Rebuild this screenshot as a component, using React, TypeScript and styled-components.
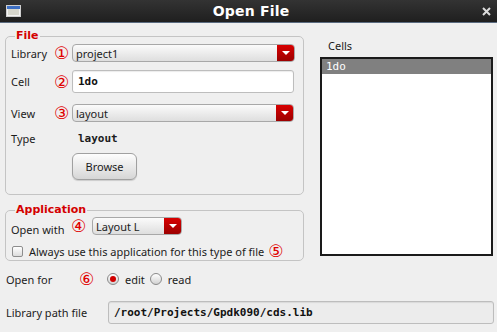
import styled, { createGlobalStyle } from "styled-components";

const GlobalStyle = createGlobalStyle`
  html, body {
    margin: 0;
    padding: 0;
    background: #efefef;
  }
  body {
    font-family: "Noto Sans", "DejaVu Sans", sans-serif;
    font-size: 11px;
    color: #1c1c1c;
  }
`;

const MONO = `"DejaVu Sans Mono", "Liberation Mono", monospace`;

const Window = styled.div`
  width: 497px;
  height: 332px;
  background: #efefef;
  display: flex;
  flex-direction: column;
  overflow: hidden;
`;

const TitleBar = styled.div`
  height: 22px;
  flex: none;
  display: flex;
  align-items: center;
  padding: 0 6px;
  background: linear-gradient(#333333, #1f1f1f);
  border-bottom: 1px solid #5a6b80;
`;

const Title = styled.div`
  flex: 1;
  text-align: center;
  color: #ffffff;
  font-family: "DejaVu Sans", sans-serif;
  font-weight: bold;
  font-size: 14px;
  letter-spacing: 0.2px;
`;

const CloseX = styled.div`
  width: 10px;
  height: 10px;
  display: flex;
  align-items: center;
  justify-content: center;
`;

const Main = styled.div`
  display: flex;
  padding: 6px 4px 0 5px;
  gap: 16px;
`;

const LeftCol = styled.div`
  width: 299px;
  display: flex;
  flex-direction: column;
  gap: 8px;
`;

const Group = styled.fieldset`
  margin: 0;
  padding: 0 8px ${p => p.$pb}px 5px;
  border: 1px solid #c4c4c4;
  border-radius: 5px;
  min-width: 0;
`;

const Legend = styled.legend`
  color: #d40000;
  font-family: "DejaVu Sans", sans-serif;
  font-weight: bold;
  font-size: 11px;
  line-height: 14px;
  padding: 0 1px;
  margin-left: 4px;
`;

const Row = styled.div`
  display: flex;
  align-items: center;
  height: ${p => p.$h}px;
  margin-top: ${p => p.$mt}px;
`;

const Label = styled.div`
  width: ${p => p.$w}px;
  flex: none;
  padding-top: ${p => p.$pt || 0}px;
`;

const Num = styled.span`
  color: #e00000;
  font-family: "DejaVu Sans", sans-serif;
  font-size: 17px;
  line-height: 14px;
  width: ${p => p.$w || 18}px;
  margin-left: ${p => p.$ml || 0}px;
  flex: none;
`;

const Combo = styled.div`
  width: ${p => p.$w}px;
  height: 18px;
  display: flex;
  align-items: stretch;
  border: 1px solid #a8a8a8;
  border-radius: 4px;
  background: linear-gradient(#fbfbfb, #dedede);
  box-sizing: border-box;
  overflow: hidden;
`;

const ComboText = styled.div`
  flex: 1;
  padding-left: 3px;
  display: flex;
  align-items: center;
  color: #222;
`;

const ComboArrow = styled.div`
  width: 17px;
  background: linear-gradient(#d80000, #9c0000);
  display: flex;
  align-items: center;
  justify-content: center;
  &::after {
    content: "";
    border-left: 4px solid transparent;
    border-right: 4px solid transparent;
    border-top: 4px solid #ffffff;
  }
`;

const TextField = styled.div`
  width: ${p => p.$w}px;
  height: ${p => p.$h}px;
  box-sizing: border-box;
  border: 1px solid #bdbdbd;
  border-radius: 3px;
  background: ${p => (p.$grey ? "#ececec" : "#ffffff")};
  box-shadow: inset 0 1px 1px rgba(0, 0, 0, 0.08);
  display: flex;
  align-items: center;
  padding-left: 5px;
  font-family: ${MONO};
  font-weight: bold;
  color: #111;
`;

const MonoValue = styled.div`
  font-family: ${MONO};
  font-weight: bold;
  padding-left: 6px;
`;

const Button = styled.div`
  width: 65px;
  height: 27px;
  box-sizing: border-box;
  border: 1px solid #a0a0a0;
  border-radius: 6px;
  background: linear-gradient(#fdfdfd, #d6d6d6);
  box-shadow: 0 1px 1px rgba(0, 0, 0, 0.15);
  display: flex;
  align-items: center;
  justify-content: center;
  margin-left: 61px;
`;

const Check = styled.div`
  width: 11px;
  height: 11px;
  box-sizing: border-box;
  border: 1px solid #8d8d8d;
  border-radius: 2px;
  background: linear-gradient(#ffffff, #dcdcdc);
  margin: 0 6px 0 1px;
`;

const RightCol = styled.div`
  width: 173px;
  display: flex;
  flex-direction: column;
`;

const CellsLabel = styled.div`
  padding: 10px 0 0 8px;
  height: 18px;
  line-height: 14px;
`;

const List = styled.div`
  height: 199px;
  box-sizing: border-box;
  border: 2px solid #1a1a1a;
  background: #ffffff;
`;

const ListItem = styled.div`
  height: 15px;
  display: flex;
  align-items: center;
  padding-left: 4px;
  font-family: ${MONO};
  background: ${p => (p.$selected ? "#808080" : "transparent")};
  color: ${p => (p.$selected ? "#ffffff" : "#111")};
`;

const Bottom = styled.div`
  display: flex;
  flex-direction: column;
  padding-left: 6px;
`;

const Radio = styled.div`
  width: 12px;
  height: 12px;
  box-sizing: border-box;
  border-radius: 50%;
  border: 1px solid #8a8a8a;
  background: linear-gradient(#ffffff, #d2d2d2);
  display: flex;
  align-items: center;
  justify-content: center;
  margin-right: 6px;
  &::after {
    content: "";
    width: 6px;
    height: 6px;
    border-radius: 50%;
    background: ${p => (p.$on ? "#d00000" : "transparent")};
  }
`;

const RadioText = styled.span`
  margin-right: 5px;
`;

const WindowIcon = () => (
  <svg width="15" height="12" viewBox="0 0 15 12">
    <rect x="0.5" y="0.5" width="14" height="11" fill="#f4f4f4" stroke="#cfcfcf" />
    <rect x="1" y="1" width="13" height="3" fill="#3d6fc4" />
    <rect x="2" y="4" width="11" height="6" fill="#d8d8cf" />
  </svg>
);

const CloseIcon = () => (
  <svg width="9" height="9" viewBox="0 0 9 9">
    <path d="M1 1 L8 8 M8 1 L1 8" stroke="#dcdcdc" strokeWidth="2" />
  </svg>
);

export default function App() {
  return (
    <>
      <GlobalStyle />
      <Window>
        <TitleBar>
          <WindowIcon />
          <Title>Open File</Title>
          <CloseX>
            <CloseIcon />
          </CloseX>
        </TitleBar>

        <Main>
          <LeftCol>
            <Group $pb={14}>
              <Legend>File</Legend>
              <Row $h={18} $mt={1}>
                <Label $w={43}>Library</Label>
                <Num>①</Num>
                <Combo $w={224}>
                  <ComboText>project1</ComboText>
                  <ComboArrow />
                </Combo>
              </Row>
              <Row $h={23} $mt={8}>
                <Label $w={43}>Cell</Label>
                <Num>②</Num>
                <TextField $w={222} $h={23}>1do</TextField>
              </Row>
              <Row $h={18} $mt={11}>
                <Label $w={43}>View</Label>
                <Num>③</Num>
                <Combo $w={222}>
                  <ComboText>layout</ComboText>
                  <ComboArrow />
                </Combo>
              </Row>
              <Row $h={14} $mt={9}>
                <Label $w={61}>Type</Label>
                <MonoValue>layout</MonoValue>
              </Row>
              <Row $h={27} $mt={8}>
                <Button>Browse</Button>
              </Row>
            </Group>

            <Group $pb={2}>
              <Legend>Application</Legend>
              <Row $h={18} $mt={0}>
                <Label $w={60} $pt={6}>Open with</Label>
                <Num $w={21}>④</Num>
                <Combo $w={90}>
                  <ComboText>Layout L</ComboText>
                  <ComboArrow />
                </Combo>
              </Row>
              <Row $h={14} $mt={9}>
                <Check />
                <span>Always use this application for this type of file</span>
                <Num $ml={4}>⑤</Num>
              </Row>
            </Group>
          </LeftCol>

          <RightCol>
            <CellsLabel>Cells</CellsLabel>
            <List>
              <ListItem $selected>1do</ListItem>
            </List>
          </RightCol>
        </Main>

        <Bottom>
          <Row $h={16} $mt={10}>
            <Label $w={73}>Open for</Label>
            <Num $w={28}>⑥</Num>
            <Radio $on />
            <RadioText>edit</RadioText>
            <Radio />
            <RadioText>read</RadioText>
          </Row>
          <Row $h={23} $mt={14}>
            <Label $w={102}>Library path file</Label>
            <TextField $w={386} $h={23} $grey>
              /root/Projects/Gpdk090/cds.lib
            </TextField>
          </Row>
        </Bottom>
      </Window>
    </>
  );
}
